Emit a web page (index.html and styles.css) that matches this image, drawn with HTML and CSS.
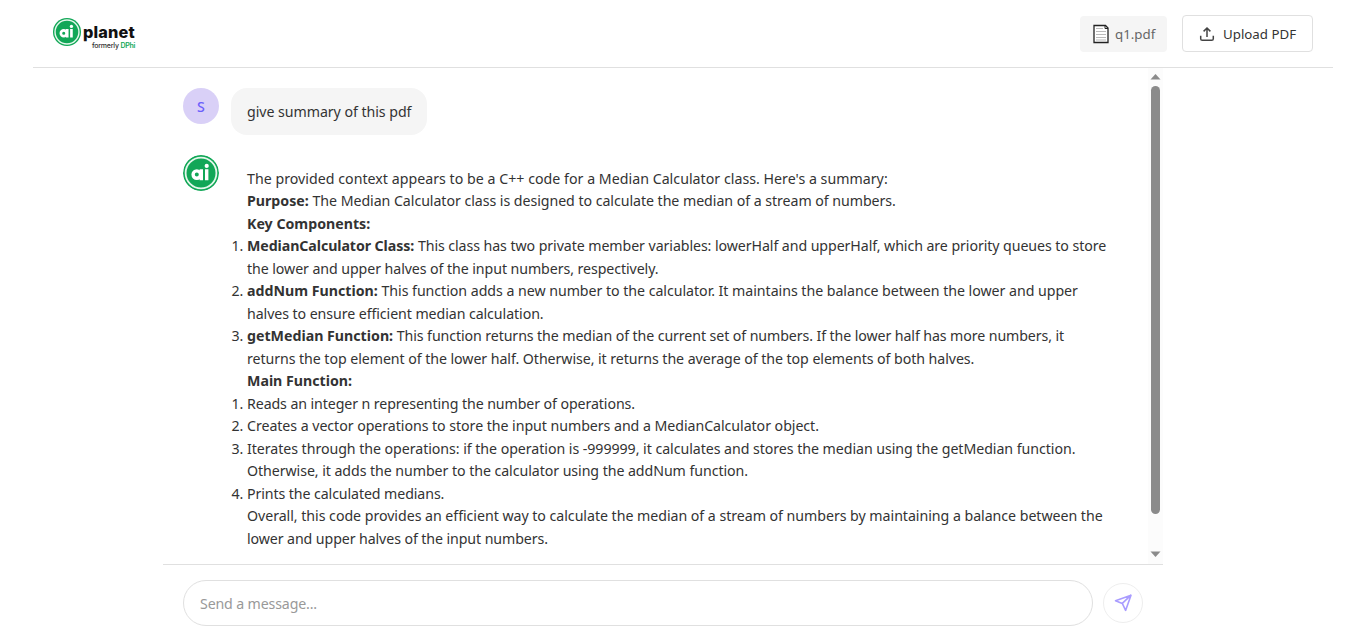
FILE: index.html
```html
<!DOCTYPE html>
<html lang="en">
<head>
<meta charset="utf-8">
<title>AI Planet</title>
<link rel="stylesheet" href="styles.css">
</head>
<body>
<header class="header">
  <div class="logo">
    <svg class="logo-mark" viewBox="0 0 36 36"><circle cx="18" cy="18" r="18" fill="#12a757"/><circle cx="18" cy="18" r="15.4" fill="none" stroke="#e4f7eb" stroke-width="1.8"/><g fill="none" stroke="#fff" stroke-width="3.4"><circle cx="13.8" cy="19.6" r="3.7"/><path d="M18.3 14.2v11M23.7 14.2v11"/></g><circle cx="23.7" cy="10.9" r="2.1" fill="#fff"/></svg>
    <div class="logo-text"><div class="logo-name">planet</div><div class="logo-sub">formerly <span class="green">DPhi</span></div></div>
  </div>
  <div class="actions">
    <div class="file">
      <svg width="16" height="20" viewBox="0 0 16 20"><path d="M1 1.5h11.5l2.5 2.5v14.5H1z" fill="#fff" stroke="#222" stroke-width="1.3"/><path d="M12 1.5v3h3" fill="none" stroke="#222"/><path d="M3 4.5h7M3 7.5h10M3 10.5h10M3 13.5h10M3 16h10" stroke="#bbb"/></svg>
      <span class="file-name">q1.pdf</span>
    </div>
    <button class="upload">
      <svg width="16" height="16" viewBox="0 0 16 16" fill="none" stroke="#444" stroke-width="1.5"><path d="M8 11V2.2M4.6 5.4L8 2l3.4 3.4M1.7 9.8v2.9q0 1.6 1.6 1.6h9.4q1.6 0 1.6-1.6V9.8"/></svg>
      <span class="upload-label">Upload PDF</span>
    </button>
  </div>
</header>
<main class="chat">
  <section class="scroll">
    <div class="messages">
      <div class="message"><div class="avatar">S</div><div class="bubble user"><span class="snug">give summary of this pdf</span></div></div>
      <div class="message">
        <svg class="avatar-ai" viewBox="0 0 36 36"><circle cx="18" cy="18" r="18" fill="#12a757"/><circle cx="18" cy="18" r="15.4" fill="none" stroke="#e4f7eb" stroke-width="1.8"/><g fill="none" stroke="#fff" stroke-width="3.4"><circle cx="13.8" cy="19.6" r="3.7"/><path d="M18.3 14.2v11M23.7 14.2v11"/></g><circle cx="23.7" cy="10.9" r="2.1" fill="#fff"/></svg>
        <div class="bubble">
          <p><span class="loose">The provided context appears to be a C++ code for a Median Calculator class. Here's a summary:</span></p>
          <p><b>Purpose:</b> <span class="snug">The Median Calculator class is designed to calculate the median of a stream of numbers.</span></p>
          <p><b>Key Components:</b></p>
          <ol>
            <li><b class="tight">MedianCalculator Class:</b> <span class="tight">This class has two private member variables: lowerHalf and upperHalf, which are priority queues to store</span><br><span class="tight">the lower and upper halves of the input numbers, respectively.</span></li>
            <li><b>addNum Function:</b> <span class="slight">This function adds a new number to the calculator. It maintains the balance between the lower and upper</span><br><span class="tight">halves to ensure efficient median calculation.</span></li>
            <li><b>getMedian Function:</b> <span class="tighter">This function returns the median of the current set of numbers. If the lower half has more numbers, it</span><br><span class="medium">returns the top element of the lower half. Otherwise, it returns the average of the top elements of both halves.</span></li>
          </ol>
          <p><b>Main Function:</b></p>
          <ol>
            <li><span class="tighter">Reads an integer n representing the number of operations.</span></li>
            <li><span class="snug">Creates a vector operations to store the input numbers and a MedianCalculator object.</span></li>
            <li><span class="snug">Iterates through the operations: if the operation is -999999, it calculates and stores the median using the getMedian function.</span><br><span class="medium">Otherwise, it adds the number to the calculator using the addNum function.</span></li>
            <li><span class="tighter">Prints the calculated medians.</span></li>
          </ol>
          <p><span class="slight">Overall, this code provides an efficient way to calculate the median of a stream of numbers by maintaining a balance between the</span><br><span class="tighter">lower and upper halves of the input numbers.</span></p>
        </div>
      </div>
    </div>
    <div class="scrollbar">
      <svg width="11" height="6" viewBox="0 0 11 6"><path d="M.5 5.5L5.5 0l5 5.5z" fill="#8b8b8b"/></svg>
      <div class="thumb"></div>
      <svg width="11" height="6" viewBox="0 0 11 6"><path d="M.5.5l5 5.5 5-5.5z" fill="#8b8b8b"/></svg>
    </div>
  </section>
  <footer class="composer">
    <div class="input"><span class="placeholder">Send a message...</span></div>
    <button class="send"><svg width="20" height="20" viewBox="0 0 20 20" fill="none" stroke="#a99cff" stroke-width="1.6" stroke-linejoin="round"><path d="M18 2.2L2.5 7.8l6.8 2.6 3.3 7zM18 2.2l-8.7 8.2"/></svg></button>
  </footer>
</main>
</body>
</html>
```
FILE: styles.css
```css
* { box-sizing: border-box; }
body { margin: 0; height: 639px; overflow: hidden; background: #fff; color: #333; font: 14.2px/22.5px "Noto Sans", "Open Sans", sans-serif; }
button { font: inherit; color: inherit; background: #fff; padding: 0; }
p, ol { margin: 0; padding: 0; white-space: nowrap; }
.header { height: 68px; margin: 0 33px; border-bottom: 1px solid #e0e0e0; display: flex; justify-content: space-between; padding: 15px 20px 0; }
.logo { display: flex; padding-top: 3px; gap: 2px; }
.logo-mark { width: 28px; height: 28px; }
.logo-text { padding-top: 4px; }
.logo-name { font: 800 16.3px/20px Inter, sans-serif; letter-spacing: .15px; color: #111; }
.logo-sub { font: 500 7px/8px Inter, sans-serif; letter-spacing: -.22px; padding-left: 9px; color: #333; white-space: nowrap; }
.green { color: #12a757; font-weight: 600; }
.actions { display: flex; gap: 15px; }
.file { width: 87px; height: 36px; margin-top: 1px; border-radius: 4px; background: #f5f5f5; color: #666; display: flex; align-items: center; padding-left: 13px; gap: 6px; font-size: 13.3px; }
.upload { width: 131px; height: 37px; border: 1px solid #e0e0e0; border-radius: 4px; display: flex; align-items: center; padding-left: 16px; gap: 8px; font-size: 13.3px; white-space: nowrap; }
.upload-label { padding-top: 1px; }
.chat { width: 1000px; height: 571px; margin-left: 163px; display: flex; flex-direction: column; }
.scroll { height: 496px; display: flex; overflow: hidden; }
.messages { flex: 1; min-width: 0; padding: 20px 20px 0; display: flex; flex-direction: column; gap: 20px; }
.message { display: flex; gap: 12px; align-items: flex-start; }
.avatar, .avatar-ai { width: 36px; height: 36px; flex: none; border-radius: 50%; }
.avatar { background: #d9d0f7; color: #6c5ffc; text-align: center; font-weight: 500; line-height: 37px; }
.avatar-ai { margin-top: .5px; }
.bubble { padding: 13px 16px 11px; border-radius: 16px; }
.user { width: 196px; background: #f5f5f5; white-space: nowrap; }
.loose { letter-spacing: .02px; }
.slight { letter-spacing: -.04px; }
.snug { letter-spacing: -.052px; }
.medium { letter-spacing: -.066px; }
.tight { letter-spacing: -.079px; }
.tighter { letter-spacing: -.097px; }
.scrollbar { width: 15px; flex: none; background: #fcfcfc; display: flex; flex-direction: column; align-items: center; padding: 6px 0 7px; }
.scrollbar svg { flex: none; }
.thumb { width: 9px; height: 428px; margin: 6px 0 37px; border-radius: 5px; background: #8b8b8b; }
.composer { flex: 1; border-top: 1px solid #e0e0e0; padding: 15px 20px 0; display: flex; gap: 10px; }
.input { width: 910px; height: 46px; border: 1px solid #e0e0e0; border-radius: 23px; padding: 12px 16px 10px; color: #999; }
.placeholder { letter-spacing: -.15px; }
.send { width: 40px; height: 40px; margin-top: 3px; border: 1px solid #eee; border-radius: 50%; display: flex; align-items: center; justify-content: center; }
```
